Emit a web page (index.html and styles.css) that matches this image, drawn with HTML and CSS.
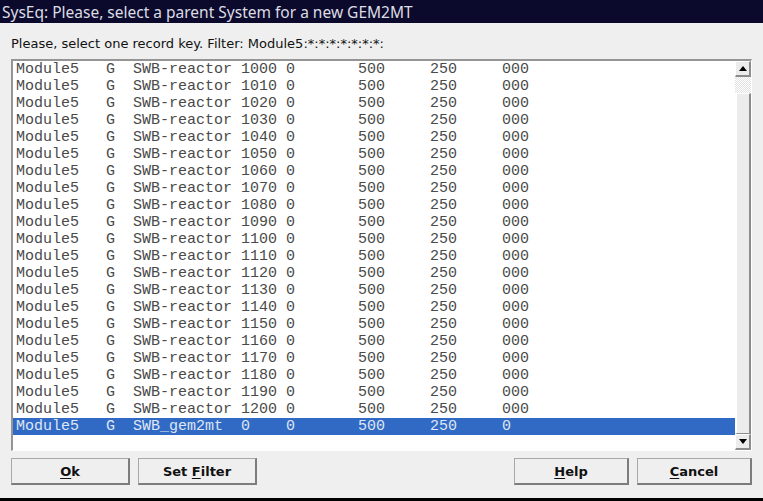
FILE: index.html
```html
<!DOCTYPE html>
<html>
<head>
<meta charset="utf-8">
<link rel="stylesheet" href="styles.css">
</head>
<body>
<div class="window">
  <div class="titlebar">SysEq: Please, select a parent System for a new GEM2MT</div>
  <div class="content">
    <div class="label">Please, select one record key. Filter: Module5:*:*:*:*:*:*:*:</div>
    <div class="listbox">
      <div class="list">
        <div class="row">Module5   G  SWB-reactor 1000 0       500     250     000</div>
        <div class="row">Module5   G  SWB-reactor 1010 0       500     250     000</div>
        <div class="row">Module5   G  SWB-reactor 1020 0       500     250     000</div>
        <div class="row">Module5   G  SWB-reactor 1030 0       500     250     000</div>
        <div class="row">Module5   G  SWB-reactor 1040 0       500     250     000</div>
        <div class="row">Module5   G  SWB-reactor 1050 0       500     250     000</div>
        <div class="row">Module5   G  SWB-reactor 1060 0       500     250     000</div>
        <div class="row">Module5   G  SWB-reactor 1070 0       500     250     000</div>
        <div class="row">Module5   G  SWB-reactor 1080 0       500     250     000</div>
        <div class="row">Module5   G  SWB-reactor 1090 0       500     250     000</div>
        <div class="row">Module5   G  SWB-reactor 1100 0       500     250     000</div>
        <div class="row">Module5   G  SWB-reactor 1110 0       500     250     000</div>
        <div class="row">Module5   G  SWB-reactor 1120 0       500     250     000</div>
        <div class="row">Module5   G  SWB-reactor 1130 0       500     250     000</div>
        <div class="row">Module5   G  SWB-reactor 1140 0       500     250     000</div>
        <div class="row">Module5   G  SWB-reactor 1150 0       500     250     000</div>
        <div class="row">Module5   G  SWB-reactor 1160 0       500     250     000</div>
        <div class="row">Module5   G  SWB-reactor 1170 0       500     250     000</div>
        <div class="row">Module5   G  SWB-reactor 1180 0       500     250     000</div>
        <div class="row">Module5   G  SWB-reactor 1190 0       500     250     000</div>
        <div class="row">Module5   G  SWB-reactor 1200 0       500     250     000</div>
        <div class="row selected">Module5   G  SWB_gem2mt  0    0       500     250     0</div>
      </div>
      <div class="scrollbar">
        <div class="sbtn"><span class="arrow-up"></span></div>
        <div class="trough"></div>
        <div class="thumb"></div>
        <div class="sbtn"><span class="arrow-down"></span></div>
      </div>
    </div>
    <div class="buttons">
      <div class="group">
        <button class="btn wide"><u>O</u>k</button>
        <button class="btn wide">Set <u>F</u>ilter</button>
      </div>
      <div class="group">
        <button class="btn narrow"><u>H</u>elp</button>
        <button class="btn narrow cancel"><u>C</u>ancel</button>
      </div>
    </div>
  </div>
  <div class="bottomstrip"></div>
</div>
</body>
</html>
```

FILE: styles.css
```css
html, body {
  margin: 0;
  padding: 0;
  background: #efefef;
}
.window {
  width: 763px;
  height: 501px;
  display: flex;
  flex-direction: column;
  background: #efefef;
  font-family: "DejaVu Sans", sans-serif;
}
.titlebar {
  height: 23px;
  background: #0b0a2c;
  color: #dcdce4;
  font-family: "Noto Sans", "DejaVu Sans", sans-serif;
  font-size: 15.5px;
  line-height: 24px;
  padding-left: 2px;
  white-space: nowrap;
}
.content {
  flex: 1;
  padding: 0 11px;
  display: flex;
  flex-direction: column;
}
.label {
  height: 36px;
  box-sizing: border-box;
  padding-top: 13px;
  font-size: 13px;
  line-height: 16px;
  color: #111;
}
.listbox {
  height: 392px;
  box-sizing: border-box;
  border-top: 2px solid #959595;
  border-left: 2px solid #959595;
  border-right: 1px solid #ffffff;
  border-bottom: 1px solid #ffffff;
  display: flex;
  background: #ffffff;
}
.list {
  flex: 1;
  background: #ffffff;
}
.row {
  height: 17px;
  line-height: 17px;
  padding-left: 3px;
  font-family: "Liberation Mono", monospace;
  font-size: 15px;
  color: #4a4a4a;
  white-space: pre;
}
.row.selected {
  background: #316ac5;
  color: #dfe6f4;
}
.scrollbar {
  width: 16px;
  display: flex;
  flex-direction: column;
  background: #efefef;
}
.sbtn {
  height: 16px;
  box-sizing: border-box;
  background: #ececec;
  border-top: 1px solid #ffffff;
  border-left: 1px solid #ffffff;
  border-right: 2px solid #8c8c8c;
  border-bottom: 2px solid #8c8c8c;
  display: flex;
  align-items: center;
  justify-content: center;
}
.arrow-up {
  width: 0;
  height: 0;
  border-left: 4px solid transparent;
  border-right: 4px solid transparent;
  border-bottom: 5px solid #000;
}
.arrow-down {
  width: 0;
  height: 0;
  border-left: 4px solid transparent;
  border-right: 4px solid transparent;
  border-top: 5px solid #000;
}
.trough {
  height: 16px;
  background-color: #ffffff;
  background-image: repeating-conic-gradient(#e2e2e2 0 25%, #ffffff 0 50%);
  background-size: 2px 2px;
}
.thumb {
  flex: 1;
  box-sizing: border-box;
  background: #ececec;
  border-top: 1px solid #ffffff;
  border-left: 2px solid #ffffff;
  border-right: 2px solid #8c8c8c;
  border-bottom: 1px solid #8c8c8c;
}
.buttons {
  margin-top: 7px;
  display: flex;
  justify-content: space-between;
}
.group {
  display: flex;
  gap: 8px;
}
.btn {
  height: 27px;
  box-sizing: border-box;
  background: #efefef;
  border-top: 1px solid #a8a8a8;
  border-left: 1px solid #a8a8a8;
  border-right: 2px solid #7c7c7c;
  border-bottom: 2px solid #7c7c7c;
  font-family: "DejaVu Sans", sans-serif;
  font-weight: bold;
  font-size: 13px;
  color: #111;
  padding: 0;
  margin: 0;
}
.btn.wide {
  width: 119px;
}
.btn.narrow {
  width: 115px;
}
.btn.cancel {
  width: 115px;
}
.btn u {
  text-decoration: underline;
  text-underline-offset: 2px;
}
.bottomstrip {
  height: 3px;
  background: #000;
}
```
